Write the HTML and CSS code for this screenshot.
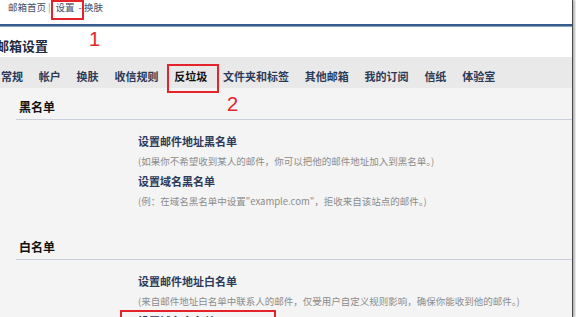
FILE: index.html
```html
<!DOCTYPE html>
<html lang="zh-CN">
<head>
  <meta charset="UTF-8" />
  <title>邮箱设置</title>
  <link rel="stylesheet" href="styles.css">
</head>
<body>
  <div class="page">
    <div class="topnav">
      <a>邮箱首页</a><span class="sep">|</span><a>设置</a><span class="dash">-</span><a>换肤</a>
    </div>
    <div class="blueline"></div>

    <div class="title">邮箱设置</div>

    <div class="tabs">
      <span class="tab">常规</span>
      <span class="tab">帐户</span>
      <span class="tab">换肤</span>
      <span class="tab">收信规则</span>
      <span class="tab active">反垃圾</span>
      <span class="tab">文件夹和标签</span>
      <span class="tab">其他邮箱</span>
      <span class="tab">我的订阅</span>
      <span class="tab">信纸</span>
      <span class="tab">体验室</span>
    </div>

    <div class="content">
      <div class="section">
        <div class="section-head">黑名单</div>
        <div class="items">
          <div class="item-title">设置邮件地址黑名单</div>
          <div class="item-desc">(如果你不希望收到某人的邮件，你可以把他的邮件地址加入到黑名单。)</div>
          <div class="item-title">设置域名黑名单</div>
          <div class="item-desc">(例：在域名黑名单中设置"example.com"，拒收来自该站点的邮件。)</div>
        </div>
      </div>

      <div class="section">
        <div class="section-head">白名单</div>
        <div class="items">
          <div class="item-title">设置邮件地址白名单</div>
          <div class="item-desc">(来自邮件地址白名单中联系人的邮件，仅受用户自定义规则影响，确保你能收到他的邮件。)</div>
          <div class="item-title">设置域名白名单</div>
          <div class="item-desc">(例：在域名白名单中设置"example.com"，来自该站点的邮件将不被拦截。)</div>
        </div>
      </div>
    </div>
  </div>

  <!-- annotations drawn on top of the screenshot -->
  <div class="mark box-nav"></div>
  <div class="mark box-tab"></div>
  <div class="mark box-item"></div>
  <div class="num num-1">1</div>
  <div class="num num-2">2</div>
</body>
</html>
```

FILE: styles.css
```css
body {
  margin: 0;
  background: #fff;
  font-family: "Noto Sans CJK SC", "Noto Sans", sans-serif;
  width: 576px;
  height: 317px;
  overflow: hidden;
  position: relative;
}

.page {
  width: 572px;
  height: 317px;
  border-right: 1px solid #4a4a4a;
  box-shadow: 2px 0 2px rgba(0,0,0,0.3);
  overflow: hidden;
}

.topnav {
  height: 24px;
  padding-left: 8px;
  font-size: 9.5px;
  line-height: 14px;
  color: #3e4c68;
}

.topnav .sep {
  color: #999;
  margin: 0 5px 0 2px;
}

.topnav .dash {
  margin: 0 2px 0 4px;
}

.blueline {
  height: 2px;
  background: #355c8a;
  border-bottom: 1px solid #8aa3c4;
}

.title {
  height: 14px;
  padding: 12px 0 4px;
  margin-left: -4px;
  font-size: 13px;
  line-height: 14px;
  font-weight: bold;
  color: #1e2a44;
}

.tabs {
  height: 18px;
  padding: 13px 0 0 1px;
  background: #e9e9e9;
  display: flex;
  gap: 15.8px;
}

.tab {
  font-size: 11px;
  line-height: 13px;
  font-weight: bold;
  color: #2c3a58;
  white-space: nowrap;
}

.tab.active {
  color: #111;
}

.content {
  background: #f4f4f4;
  height: 229px;
  padding-top: 12px;
}

.section {
  margin-left: 16px;
}

.section-head {
  padding: 0 0 5px 3px;
  font-size: 12px;
  line-height: 14px;
  font-weight: bold;
  color: #111;
  border-bottom: 1px solid #c9d0dc;
}

.items {
  padding: 11px 0 29px 122px;
}

.item-title {
  font-size: 11px;
  line-height: 20px;
  font-weight: bold;
  color: #2d3a5a;
}

.item-desc {
  font-size: 9.5px;
  line-height: 20px;
  color: #8c8c8c;
  white-space: nowrap;
}

.mark {
  position: absolute;
  border: 2px solid #e5232a;
  box-sizing: border-box;
}

.box-nav {
  left: 51px;
  top: 0;
  width: 33px;
  height: 20px;
}

.box-tab {
  left: 167px;
  top: 64px;
  width: 52px;
  height: 29px;
}

.box-item {
  left: 120px;
  top: 310px;
  width: 156px;
  height: 20px;
}

.num {
  position: absolute;
  font-family: "Liberation Sans", Arial, sans-serif;
  font-size: 20px;
  line-height: 20px;
  color: #e5232a;
}

.num-1 {
  left: 89px;
  top: 29px;
}

.num-2 {
  left: 227px;
  top: 94px;
}
```
